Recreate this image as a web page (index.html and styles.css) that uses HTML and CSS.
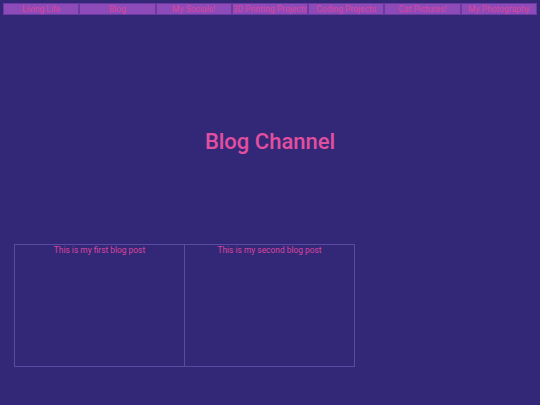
FILE: index.html
```html
<!DOCTYPE html>
<html>
<head>
<meta charset="utf-8">
<link rel="stylesheet" href="styles.css">
</head>
<body>
<nav class="nav">
  <a class="nav-item">Living Life</a>
  <a class="nav-item">Blog</a>
  <a class="nav-item">My Socials!</a>
  <a class="nav-item">3D Printing Projects</a>
  <a class="nav-item">Coding Projects</a>
  <a class="nav-item">Cat Pictures!</a>
  <a class="nav-item">My Photography</a>
</nav>
<h1 class="title">Blog Channel</h1>
<section class="posts">
  <div class="post">This is my first blog post</div>
  <div class="post">This is my second blog post</div>
</section>
</body>
</html>
```
FILE: styles.css
```css
html, body {
  margin: 0;
  padding: 0;
  background: #332878;
  font-family: Roboto, "Liberation Sans", sans-serif;
}
body {
  padding: 3px;
}
.nav {
  display: flex;
  height: 12px;
}
.nav-item {
  flex: 1;
  background: #8c4bb9;
  border: 1px solid #6a3aa0;
  color: #d9469c;
  font-size: 8.5px;
  line-height: 11px;
  text-align: center;
  white-space: nowrap;
  overflow: hidden;
}
.title {
  margin: 112px 0 0;
  text-align: center;
  color: #e24f9f;
  font-size: 22px;
  font-weight: 500;
  line-height: 30px;
}
.posts {
  display: flex;
  margin: 87px 0 0 11px;
}
.post {
  width: 169px;
  height: 121px;
  border: 1px solid #5a4aa2;
  color: #d9469c;
  font-size: 8.4px;
  line-height: 11px;
  text-align: center;
}
.post + .post {
  border-left: none;
}
```
